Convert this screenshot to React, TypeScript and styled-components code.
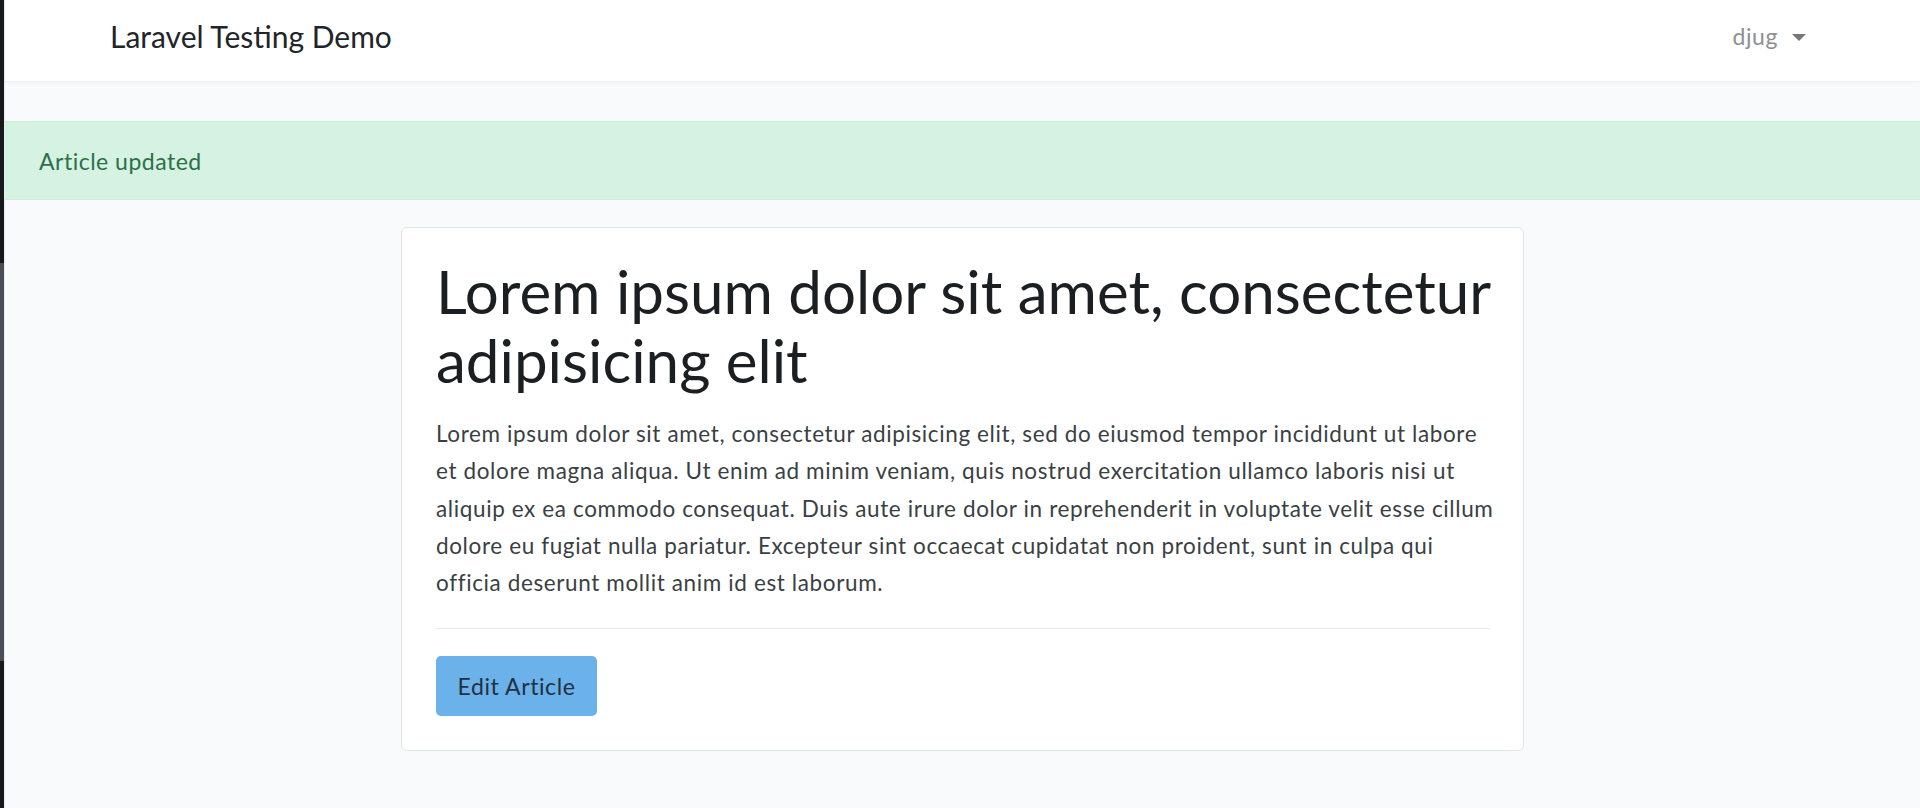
import React from 'react';
import styled, { createGlobalStyle } from 'styled-components';

const GlobalStyle = createGlobalStyle`
  html, body {
    margin: 0;
    padding: 0;
    background: #f8fafc;
    font-family: Lato, "Noto Sans", sans-serif;
    color: #212529;
  }
  * {
    box-sizing: border-box;
  }
`;

const Page = styled.div`
  display: flex;
  min-height: 100vh;
`;

const WindowEdge = styled.div`
  flex: 0 0 5px;
  border-right: 1px solid #e9ecef;
  background: linear-gradient(
    to bottom,
    #18191d 0,
    #18191d 263px,
    #4a4d56 263px,
    #4a4d56 661px,
    #18191d 661px
  );
`;

const Main = styled.div`
  flex: 1;
  display: flex;
  flex-direction: column;
`;

const Navbar = styled.nav`
  height: 82px;
  background: #fff;
  border-bottom: 1px solid #eef0f2;
  box-shadow: 0 1px 3px rgba(0, 0, 0, 0.03);
  display: flex;
  align-items: center;
  justify-content: space-between;
  padding: 0 114px 9px 105px;
`;

const Brand = styled.a`
  font-size: 30px;
  color: #212529;
  text-decoration: none;
`;

const UserToggle = styled.button`
  display: flex;
  align-items: center;
  gap: 14px;
  border: 0;
  background: none;
  padding: 0;
  font-family: inherit;
  font-size: 23px;
  letter-spacing: 0.6px;
  color: #8e9093;
  cursor: pointer;
`;

const Caret = styled.span`
  width: 0;
  height: 0;
  border-left: 7px solid transparent;
  border-right: 7px solid transparent;
  border-top: 7px solid #777;
  margin-top: 2px;
`;

const Alert = styled.div`
  margin-top: 39px;
  height: 79px;
  display: flex;
  align-items: center;
  padding-left: 34px;
  background: #d6f2e3;
  border-top: 1px solid #cdeedc;
  border-bottom: 1px solid #cdeedc;
  font-size: 23px;
  letter-spacing: 0.5px;
  color: #2c7049;
`;

const Card = styled.article`
  width: 1123px;
  margin: 27px auto 40px;
  background: #fff;
  border: 1px solid #e1e4e8;
  border-radius: 6px;
  padding: 29px 33px 34px 34px;
`;

const Title = styled.h1`
  margin: 0 -16px 20px 0;
  font-size: 60.1px;
  font-weight: 400;
  line-height: 69px;
  color: #1c1f22;
`;

const Body = styled.p`
  margin: 0;
  font-size: 22.5px;
  letter-spacing: 0.62px;
  line-height: 37.3px;
  color: #3a3f44;
  white-space: nowrap;
`;

const Divider = styled.hr`
  margin: 27px 0 27px;
  border: 0;
  border-top: 1px solid #e8eaed;
`;

const EditButton = styled.button`
  width: 161px;
  height: 60px;
  border: 0;
  border-radius: 5px;
  background: #6bb1ea;
  font-family: inherit;
  font-size: 23px;
  letter-spacing: 0.6px;
  color: #22313f;
  cursor: pointer;
`;

const bodyLines = [
  'Lorem ipsum dolor sit amet, consectetur adipisicing elit, sed do eiusmod tempor incididunt ut labore',
  'et dolore magna aliqua. Ut enim ad minim veniam, quis nostrud exercitation ullamco laboris nisi ut',
  'aliquip ex ea commodo consequat. Duis aute irure dolor in reprehenderit in voluptate velit esse cillum',
  'dolore eu fugiat nulla pariatur. Excepteur sint occaecat cupidatat non proident, sunt in culpa qui',
  'officia deserunt mollit anim id est laborum.',
];

const App = () => (
  <>
    <GlobalStyle />
    <Page>
      <WindowEdge />
      <Main>
        <Navbar>
          <Brand href="#">Laravel Testing Demo</Brand>
          <UserToggle type="button">
            djug
            <Caret />
          </UserToggle>
        </Navbar>
        <Alert>Article updated</Alert>
        <Card>
          <Title>Lorem ipsum dolor sit amet, consectetur adipisicing elit</Title>
          <Body>
            {bodyLines.map((line, i) => (
              <React.Fragment key={line}>
                {line}
                {i < bodyLines.length - 1 && <br />}
              </React.Fragment>
            ))}
          </Body>
          <Divider />
          <EditButton type="button">Edit Article</EditButton>
        </Card>
      </Main>
    </Page>
  </>
);

export default App;
